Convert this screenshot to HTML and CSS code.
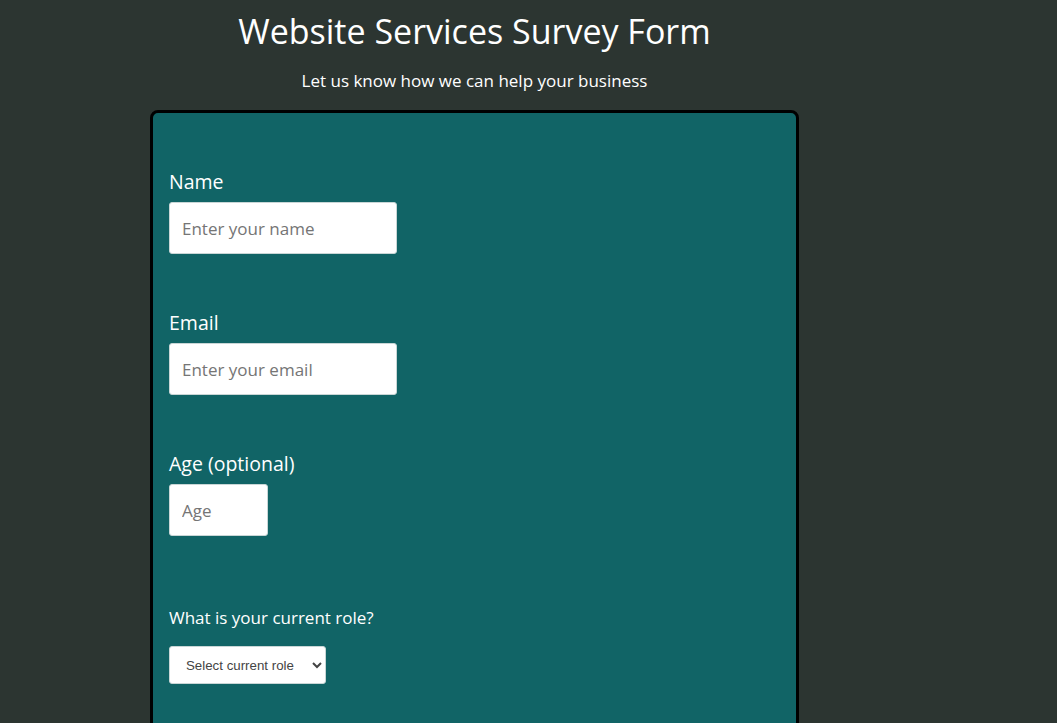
FILE: index.html
```html
<!DOCTYPE html>
<html lang="en">
<head>
<meta charset="utf-8">
<title>Website Services Survey Form</title>
<link rel="stylesheet" href="styles.css">
</head>
<body>
<main class="page">
  <header class="header">
    <h1 class="title">Website Services Survey Form</h1>
    <p class="subtitle">Let us know how we can help your business</p>
  </header>
  <form class="survey">
    <div class="group">
      <label class="label" for="name">Name</label>
      <input class="field field-wide" id="name" type="text" placeholder="Enter your name">
    </div>
    <div class="group">
      <label class="label" for="email">Email</label>
      <input class="field field-wide" id="email" type="email" placeholder="Enter your email">
    </div>
    <div class="group">
      <label class="label" for="age">Age (optional)</label>
      <input class="field field-age" id="age" type="number" placeholder="Age">
    </div>
    <div class="group group-role">
      <label class="label label-small" for="role">What is your current role?</label>
      <select class="select" id="role">
        <option>Select current role</option>
      </select>
    </div>
  </form>
</main>
</body>
</html>
```

FILE: styles.css
```css
* { box-sizing: border-box; }

body {
  margin: 0;
  background: #2C3531;
  font-family: "Open Sans", "Noto Sans", sans-serif;
  color: #fff;
}

.page {
  width: 649px;
  margin-left: 150px;
}

.header {
  text-align: center;
  padding-top: 9px;
}

.title {
  margin: 0;
  font-size: 34px;
  font-weight: 400;
  line-height: 44px;
}

.subtitle {
  margin: 16px 0 0;
  font-size: 17px;
  line-height: 24px;
}

.survey {
  margin-top: 17px;
  background: #116466;
  border: 3px solid #000;
  border-radius: 8px;
  padding: 0 16px 60px;
  min-height: 700px;
}

.group {
  display: flex;
  flex-direction: column;
  align-items: flex-start;
  padding-top: 56px;
}

.label {
  font-size: 19.5px;
  line-height: 26px;
  margin-bottom: 7px;
}

.label-small {
  font-size: 17px;
  line-height: 24px;
  margin-bottom: 16px;
}

.group-role {
  padding-top: 70px;
}

.field {
  height: 52px;
  border: 1px solid #c9d6d6;
  border-radius: 3px;
  background: #fff;
  padding: 0 12px;
  font-family: inherit;
  font-size: 17px;
  color: #333;
}

.field::placeholder { color: #757575; }

.field-wide { width: 228px; }
.field-age { width: 99px; }

.select {
  width: 157px;
  height: 38px;
  border: 1px solid #c9d6d6;
  border-radius: 3px;
  background: #fff;
  padding: 0 12px;
  font-family: "Liberation Sans", Arial, sans-serif;
  font-size: 13.3px;
  color: #444;
}
```
